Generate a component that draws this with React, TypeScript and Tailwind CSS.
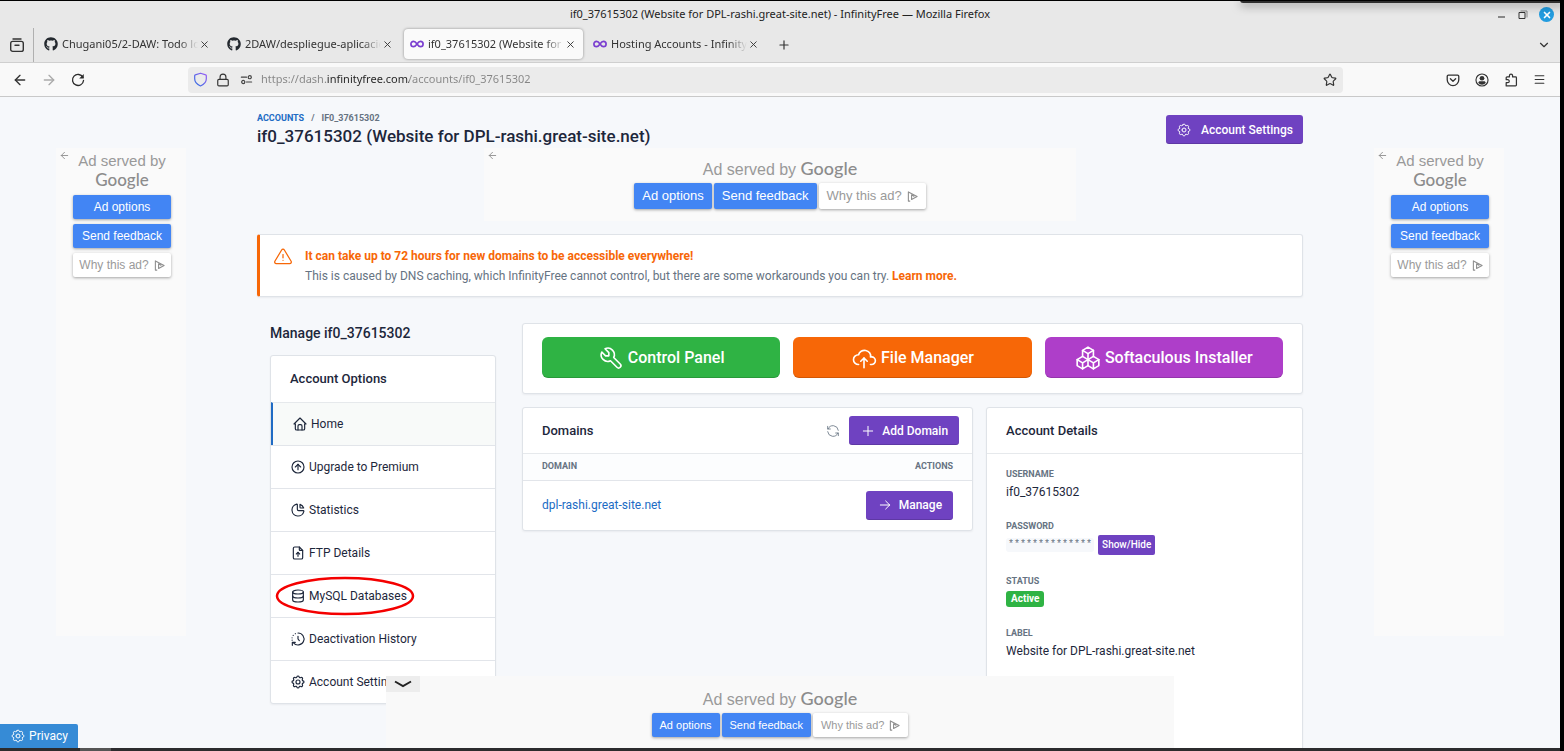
import React from 'react';
import {
  TbArrowRight,
  TbAlertTriangle,
  TbChartPie,
  TbCircleArrowUp,
  TbCloudUpload,
  TbDatabase,
  TbFileUpload,
  TbHome,
  TbPackages,
  TbPlus,
  TbRefresh,
  TbSettings,
  TbTool,
} from 'react-icons/tb';
import { FaGithub } from 'react-icons/fa';
import { ArrowLeft, ArrowRight, ChevronDown, Lock, Menu, Plus, Star, X } from 'lucide-react';

type IconProps = { className?: string };

function ArchiveIcon() {
  return (
    <svg viewBox="0 0 16 16" className="size-4" fill="none" stroke="#333" strokeWidth="1.4" strokeLinecap="round">
      <path d="M4 2h8" />
      <rect x="1.7" y="4.4" width="12.6" height="10" rx="2" />
      <path d="M6 8.2h4" />
    </svg>
  );
}

function InfinityLogo() {
  return (
    <svg viewBox="0 0 14 14" className="size-[14px] shrink-0" fill="none" stroke="#7b3fd0" strokeWidth="1.7">
      <path d="M7 7C5.8 5.2 4.8 4.3 3.6 4.3a2.7 2.7 0 0 0 0 5.4C4.8 9.7 5.8 8.8 7 7s2.2-2.7 3.4-2.7a2.7 2.7 0 0 1 0 5.4C9.2 9.7 8.2 8.8 7 7Z" />
    </svg>
  );
}

function ReloadIcon() {
  return (
    <svg viewBox="0 0 16 16" className="size-[14px]" fill="none" stroke="#2b2b2b" strokeWidth="1.5" strokeLinecap="round">
      <path d="M13.6 5A6.3 6.3 0 1 0 14.3 8.5" />
      <path d="M14.6 1v5.2H9.4Z" fill="#2b2b2b" stroke="none" />
    </svg>
  );
}

function ShieldIcon() {
  return (
    <svg viewBox="0 0 16 16" className="size-[15px] shrink-0" fill="none" strokeWidth="1.3" strokeLinejoin="round">
      <defs>
        <linearGradient id="shield-tint" x1="0" y1="1" x2="1" y2="0">
          <stop offset="0" stopColor="#2f6fe0" />
          <stop offset="1" stopColor="#9a5cf5" />
        </linearGradient>
      </defs>
      <path
        stroke="url(#shield-tint)"
        d="M8 1.3 13.6 3c.4.1.6.5.6.9v3.3c0 3.4-2.3 6-6.2 7.7-3.9-1.7-6.2-4.3-6.2-7.7V3.9c0-.4.2-.8.6-.9Z"
      />
    </svg>
  );
}

function PermissionsIcon() {
  return (
    <svg viewBox="0 0 14 14" className="size-[13px] shrink-0" fill="none" stroke="#444" strokeWidth="1.3" strokeLinecap="round">
      <path d="M1.5 4.5h5.5M7 9.7h5.5" />
      <circle cx="10.5" cy="4.5" r="1.7" />
      <circle cx="3.5" cy="9.7" r="1.7" />
    </svg>
  );
}

function PocketIcon() {
  return (
    <svg viewBox="0 0 16 16" className="size-[14px]" fill="none" stroke="#333" strokeWidth="1.5" strokeLinecap="round" strokeLinejoin="round">
      <path d="M2.7 2.5h10.6c.8 0 1.3.5 1.3 1.3v4A6.6 6.6 0 0 1 1.4 7.8v-4c0-.8.5-1.3 1.3-1.3Z" />
      <path d="m5 6.6 3 2.9 3-2.9" />
    </svg>
  );
}

function AccountIcon() {
  return (
    <svg viewBox="0 0 16 16" className="size-[14px]">
      <circle cx="8" cy="8" r="6.9" fill="none" stroke="#333" strokeWidth="1.3" />
      <circle cx="8" cy="6" r="2.7" fill="#333" />
      <path d="M3.8 11.5c0-1.3.8-2 2-2h4.4c1.2 0 2 .7 2 2A5.6 5.6 0 0 1 8 13.4a5.6 5.6 0 0 1-4.2-1.9Z" fill="#333" />
    </svg>
  );
}

function ExtensionIcon() {
  return (
    <svg viewBox="0 0 16 16" className="size-[14px]" fill="none" stroke="#333" strokeWidth="1.4" strokeLinejoin="round">
      <path d="M2.5 14.8V11h1.8a1.7 1.7 0 0 0 0-3.4H2.5V5.5c0-.6.4-1 1-1h2.7V3a1.8 1.8 0 0 1 3.6 0v1.5h3.4c.6 0 1 .4 1 1v8.3c0 .6-.4 1-1 1Z" />
    </svg>
  );
}

function HistoryIcon({ className }: IconProps) {
  return (
    <svg viewBox="0 0 24 24" className={className} fill="none" stroke="currentColor" strokeWidth="2" strokeLinecap="round" strokeLinejoin="round">
      <path d="M12 3a9 9 0 1 1-6.8 14.9" />
      <path d="M3.500 21.500v-4.500H8" />
      <path d="M12 8v4l2 2.500" />
      <path d="M8 4v.01M4.800 6.600v.01M3.100 10.300v.01M3.200 13.800v.01" />
    </svg>
  );
}

function AdChoicesIcon() {
  return (
    <svg viewBox="0 0 12 12" className="size-[11px] shrink-0" fill="none" stroke="#8f8f8f" strokeWidth="1.2" strokeLinejoin="round">
      <path d="M3.5 11H1.500V1l9.500 5-6 3.300V4.200L8 6" />
    </svg>
  );
}

const tabs = [
  { title: 'Chugani05/2-DAW: Todo lo h', icon: 'github', active: false },
  { title: '2DAW/despliegue-aplicacion', icon: 'github', active: false },
  { title: 'if0_37615302 (Website for D', icon: 'infinity', active: true },
  { title: 'Hosting Accounts - InfinityFr', icon: 'infinity', active: false },
];

function BrowserChrome() {
  return (
    <header className="shrink-0 font-['Noto_Sans',sans-serif] text-[#333]">
      <div className="bg-[#e8e8e8]">
        <div className="flex h-[27px] items-center">
          <div className="w-[82px]" />
          <p className="flex-1 text-center text-[11px] text-[#222]">
            if0_37615302 (Website for DPL-rashi.great-site.net) - InfinityFree — Mozilla Firefox
          </p>
          <div className="flex w-[82px] items-center justify-end gap-[10px] pr-[6px]">
            <button aria-label="Minimize" className="flex size-3 items-center justify-center">
              <span className="mt-1 h-[2px] w-[7px] bg-[#888]" />
            </button>
            <button aria-label="Restore" className="flex size-3 items-center justify-center">
              <svg viewBox="0 0 10 10" className="size-[10px]" fill="none">
                <path d="M1 2.5h6v6H1Z" stroke="#333" />
                <path d="M2.5 1H9v6.5" stroke="#888" />
              </svg>
            </button>
            <button aria-label="Close" className="flex size-[15px] items-center justify-center rounded-full bg-[#229cdf] text-white">
              <X className="size-[10px]" strokeWidth={4} />
            </button>
          </div>
        </div>
        <div className="flex h-[35px] items-stretch border-b border-[#cfcfcf]">
          <button aria-label="View recent browsing" className="flex w-[34px] items-center justify-center border-r border-[#b0b0b0]">
            <ArchiveIcon />
          </button>
          <nav className="flex pl-[2px]">
            {tabs.map((tab) => (
              <div key={tab.title} className="flex w-[183px] items-center px-[2px] pb-[2px]">
                <div
                  className={
                    tab.active
                      ? 'flex h-[30px] w-full items-center rounded bg-[#fafafa] px-[6px] shadow-[0_0_3px_rgba(0,0,0,0.4)]'
                      : 'flex h-[30px] w-full items-center px-[6px]'
                  }
                >
                  {tab.icon === 'github' ? <FaGithub className="size-[14px] shrink-0 text-[#24292f]" /> : <InfinityLogo />}
                  <span className="ml-1 flex-1 overflow-hidden whitespace-nowrap text-[11px] [mask-image:linear-gradient(90deg,#000_86%,transparent)]">
                    {tab.title}
                  </span>
                  <button aria-label="Close tab" className="flex w-[13px] shrink-0 justify-center">
                    <X className="size-[11px]" />
                  </button>
                </div>
              </div>
            ))}
          </nav>
          <button aria-label="New tab" className="flex w-8 items-center justify-center">
            <Plus className="size-[14px]" />
          </button>
          <div className="flex-1" />
          <button aria-label="List all tabs" className="flex w-8 items-center justify-center">
            <ChevronDown className="size-[14px]" />
          </button>
        </div>
      </div>
      <div className="flex h-[34px] items-center border-b border-[#c9c9c9] bg-[#f9f9f9]">
        <div className="flex w-[188px] items-center pl-[5px]">
          <button aria-label="Back" className="flex w-[29px] justify-center">
            <ArrowLeft className="size-4" />
          </button>
          <button aria-label="Forward" className="flex w-[29px] justify-center text-[#aaa]">
            <ArrowRight className="size-4" />
          </button>
          <button aria-label="Reload" className="flex w-[29px] justify-center">
            <ReloadIcon />
          </button>
        </div>
        <div className="flex h-[26px] flex-1 items-center rounded bg-[#ebebeb] pr-[6px] pl-[5px]">
          <ShieldIcon />
          <Lock className="ml-2 size-[14px] shrink-0" />
          <div className="ml-[10px] flex items-center">
            <PermissionsIcon />
          </div>
          <input
            aria-label="Address"
            defaultValue="https://dash.infinityfree.com/accounts/if0_37615302"
            className="ml-2 w-full bg-transparent bg-[linear-gradient(90deg,#858585_66px,#222_66px,#222_148px,#858585_148px)] bg-clip-text text-[11px] text-transparent outline-none"
          />
          <button aria-label="Bookmark this page" className="shrink-0">
            <Star className="size-[14px]" />
          </button>
        </div>
        <div className="flex w-[217px] items-center justify-end pr-[6px]">
          <button aria-label="Save to Pocket" className="flex w-[29px] justify-center">
            <PocketIcon />
          </button>
          <button aria-label="Account" className="flex w-[29px] justify-center">
            <AccountIcon />
          </button>
          <button aria-label="Extensions" className="flex w-[29px] justify-center">
            <ExtensionIcon />
          </button>
          <button aria-label="Open menu" className="flex w-[29px] justify-center">
            <Menu className="size-[13px]" />
          </button>
        </div>
      </div>
    </header>
  );
}

function GoogleWord() {
  return <span className="font-['Lato',sans-serif] font-medium text-[#8c8c8c]">Google</span>;
}

const adBlue = 'rounded-[2px] bg-[#4285f4] text-white shadow-[0_1px_3px_rgba(0,0,0,0.35)]';
const adWhite =
  'flex items-center justify-center gap-[5px] rounded-[2px] bg-white text-[#9a9a9a] shadow-[0_1px_3px_rgba(0,0,0,0.35)]';

function SideAd() {
  return (
    <aside className="mt-[51px] flex h-[488px] w-[130px] shrink-0 bg-[#fafafa] font-['Liberation_Sans',sans-serif]">
      <button aria-label="Go back" className="flex w-4 justify-center pt-[2px] text-[#8f8f8f]">
        <ArrowLeft className="size-[11px]" />
      </button>
      <div className="ml-px flex w-[98px] flex-col gap-[5px] pt-[3px] text-center text-[12px]">
        <p className="text-[15px] leading-[19px] text-[#999]">
          Ad served by
          <br />
          <span className="text-[17px]">
            <GoogleWord />
          </span>
        </p>
        <button className={`h-6 ${adBlue}`}>Ad options</button>
        <button className={`h-6 ${adBlue}`}>Send feedback</button>
        <button className={`h-6 ${adWhite}`}>
          Why this ad? <AdChoicesIcon />
        </button>
      </div>
    </aside>
  );
}

function TopAd() {
  return (
    <aside className="mx-auto flex h-[73px] w-[592px] bg-[#fafafa] font-['Liberation_Sans',sans-serif]">
      <button aria-label="Go back" className="flex w-4 items-start justify-center pt-[2px] text-[#8f8f8f]">
        <ArrowLeft className="size-[11px]" />
      </button>
      <div className="flex flex-1 flex-col items-center gap-px pt-2 pr-4 text-[13px]">
        <p className="text-[16px] leading-6 text-[#999]">
          Ad served by{' '}
          <span className="text-[18px]">
            <GoogleWord />
          </span>
        </p>
        <div className="flex gap-[2px]">
          <button className={`h-[26px] px-2 ${adBlue}`}>Ad options</button>
          <button className={`h-[26px] px-2 ${adBlue}`}>Send feedback</button>
          <button className={`h-[26px] px-2 ${adWhite}`}>
            Why this ad? <AdChoicesIcon />
          </button>
        </div>
      </div>
    </aside>
  );
}

function BottomAd() {
  return (
    <aside className="absolute inset-x-0 bottom-0 mx-auto flex h-[72px] w-[788px] bg-[#f9f9f9] font-['Liberation_Sans',sans-serif]">
      <button aria-label="Collapse ad" className="flex h-[16px] w-[34px] items-center justify-center bg-[#ededed]">
        <svg viewBox="0 0 18 8" className="h-2 w-[18px]" fill="none" stroke="#222" strokeWidth="2">
          <path d="M1 1.500 9 6l8-4.500" />
        </svg>
      </button>
      <div className="flex flex-1 flex-col items-center gap-px pt-[10px] pr-[34px] text-[11px]">
        <p className="text-[16px] leading-6 text-[#999]">
          Ad served by{' '}
          <span className="text-[18px]">
            <GoogleWord />
          </span>
        </p>
        <div className="flex gap-[2px]">
          <button className={`h-6 px-2 ${adBlue}`}>Ad options</button>
          <button className={`h-6 px-2 ${adBlue}`}>Send feedback</button>
          <button className={`h-6 px-2 ${adWhite}`}>
            Why this ad? <AdChoicesIcon />
          </button>
        </div>
      </div>
    </aside>
  );
}

const menu = [
  { label: 'Home', icon: TbHome },
  { label: 'Upgrade to Premium', icon: TbCircleArrowUp },
  { label: 'Statistics', icon: TbChartPie },
  { label: 'FTP Details', icon: TbFileUpload },
  { label: 'MySQL Databases', icon: TbDatabase },
  { label: 'Deactivation History', icon: HistoryIcon },
  { label: 'Account Settings', icon: TbSettings },
];

const card = 'rounded-[3px] border border-[#dfe3e8] bg-white shadow-[0_1px_2px_rgba(30,41,59,0.06)]';
const purple = 'flex h-[29px] items-center rounded-[3px] bg-[#6f42c1] font-medium text-white shadow-[inset_0_-1px_0_rgba(0,0,0,0.15)]';
const large = 'flex h-[41px] flex-1 items-center justify-center gap-1 rounded-md shadow-[inset_0_-1px_0_rgba(0,0,0,0.15)]';

function SideMenu() {
  return (
    <div className="w-[226px] shrink-0">
      <h2 className="text-[14px] leading-5 font-medium">Manage if0_37615302</h2>
      <nav className={`mt-3 ${card}`}>
        <h3 className="flex h-[46px] items-center px-[19px] text-[13px] font-medium">Account Options</h3>
        {menu.map(({ label, icon: Icon }) => (
          <a
            key={label}
            href="#"
            className={
              label === 'Home'
                ? 'flex h-[43px] items-center border-t border-l-2 border-t-[#e6e9ec] border-l-[#206bc4] bg-[#f8faf9] px-[19px]'
                : 'flex h-[43px] items-center border-t border-[#e2e5ea] px-[19px]'
            }
          >
            <span className="relative flex items-center gap-[3px]">
              <Icon className="size-4 [stroke-width:1.75]" />
              {label}
              {label === 'MySQL Databases' && (
                <svg
                  viewBox="0 0 140 40"
                  className="pointer-events-none absolute -top-[11px] -left-[15px] h-10 w-[140px]"
                  fill="none"
                  stroke="#f40000"
                  strokeWidth="2.5"
                >
                  <ellipse cx="70" cy="20" rx="68" ry="18" />
                </svg>
              )}
            </span>
          </a>
        ))}
      </nav>
    </div>
  );
}

function Label({ children }: { children: React.ReactNode }) {
  return <dt className="text-[9px] leading-4 font-bold text-[#667382] uppercase">{children}</dt>;
}

function Main() {
  return (
    <main className="min-w-0 flex-1 pt-[15px]">
      <div className="flex items-start justify-between">
        <div>
          <nav className="flex gap-[7px] text-[9px] leading-3 font-bold text-[#667382] uppercase">
            <a href="#" className="text-[#206bc4]">
              Accounts
            </a>
            <span>/</span>
            <span>if0_37615302</span>
          </nav>
          <h1 className="text-[17px] leading-6 font-medium">if0_37615302 (Website for DPL-rashi.great-site.net)</h1>
        </div>
        <button className={`mt-[3px] gap-[9px] px-[10px] ${purple}`}>
          <TbSettings className="size-4 [stroke-width:1.5]" />
          Account Settings
        </button>
      </div>

      <TopAd />

      <section className={`mt-[13px] flex h-[63px] border-l-[3px] border-l-[#f76707] pt-[11px] pl-[13px] ${card}`}>
        <TbAlertTriangle className="mt-[1px] size-5 text-[#f76707] [stroke-width:1.5]" />
        <div className="ml-3 leading-5 text-[#667382]">
          <p className="font-bold text-[#f76707]">It can take up to 72 hours for new domains to be accessible everywhere!</p>
          <p>
            This is caused by DNS caching, which InfinityFree cannot control, but there are some workarounds you can try.{' '}
            <a href="#" className="font-bold text-[#f76707]">
              Learn more.
            </a>
          </p>
        </div>
      </section>

      <div className="mt-[26px] flex items-start gap-[26px] pl-[13px]">
        <SideMenu />
        <div className="flex min-w-0 flex-1 flex-col gap-[13px]">
          <section className={`flex gap-[13px] px-[19px] pt-[13px] pb-[15px] text-[16px] font-medium text-white ${card}`}>
            <button className={`bg-[#2fb344] ${large}`}>
              <TbTool className="size-[26px] [stroke-width:1.5]" />
              Control Panel
            </button>
            <button className={`bg-[#f76707] ${large}`}>
              <TbCloudUpload className="size-[26px] [stroke-width:1.5]" />
              File Manager
            </button>
            <button className={`bg-[#ae3ec9] ${large}`}>
              <TbPackages className="size-[26px] [stroke-width:1.5]" />
              Softaculous Installer
            </button>
          </section>

          <div className="flex items-start gap-[13px]">
            <section className={`flex-[452] ${card}`}>
              <div className="flex h-[46px] items-center border-b border-[#e6e9ec] pr-[13px] pl-[19px]">
                <h3 className="flex-1 text-[13px] font-medium">Domains</h3>
                <button aria-label="Refresh" className="mr-2 text-[#667382]">
                  <TbRefresh className="size-4 [stroke-width:1.25]" />
                </button>
                <button className={`gap-[6px] px-[11px] ${purple}`}>
                  <TbPlus className="size-4 [stroke-width:1.5]" />
                  Add Domain
                </button>
              </div>
              <table className="w-full">
                <thead>
                  <tr className="h-[26px] border-b border-[#e2e5ea] bg-[#fcfdfe] text-[9px] text-[#667382] uppercase">
                    <th className="pl-[19px] text-left font-bold">Domain</th>
                    <th className="pr-[19px] text-right font-bold">Actions</th>
                  </tr>
                </thead>
                <tbody>
                  <tr className="h-[50px]">
                    <td className="pl-[19px]">
                      <a href="#" className="text-[#206bc4]">
                        dpl-rashi.great-site.net
                      </a>
                    </td>
                    <td className="pr-[19px]">
                      <button className={`ml-auto gap-[6px] px-[11px] ${purple}`}>
                        <TbArrowRight className="size-4 [stroke-width:1.5]" />
                        Manage
                      </button>
                    </td>
                  </tr>
                </tbody>
              </table>
            </section>

            <section className={`min-h-[400px] flex-[317] ${card}`}>
              <h3 className="flex h-[46px] items-center border-b border-[#e6e9ec] px-[19px] text-[13px] font-medium">
                Account Details
              </h3>
              <dl className="flex flex-col gap-4 px-[19px] pt-3 leading-5">
                <div>
                  <Label>Username</Label>
                  <dd>if0_37615302</dd>
                </div>
                <div>
                  <Label>Password</Label>
                  <dd className="flex items-center gap-1 pt-[1px] pb-[2px]">
                    <span className="h-[14px] rounded-[3px] bg-[#f6f8fb] px-[2px] font-['Liberation_Mono',monospace] text-[10px] leading-[14px] text-[#667382]">
                      **************
                    </span>
                    <button className="h-5 rounded-[2px] bg-[#6f42c1] px-1 text-[10px] font-medium text-white">Show/Hide</button>
                  </dd>
                </div>
                <div>
                  <Label>Status</Label>
                  <dd className="flex h-5 items-center">
                    <span className="h-4 rounded-[3px] bg-[#2fb344] px-[5px] text-[10px] leading-4 font-bold text-white">Active</span>
                  </dd>
                </div>
                <div>
                  <Label>Label</Label>
                  <dd>Website for DPL-rashi.great-site.net</dd>
                </div>
              </dl>
            </section>
          </div>
        </div>
      </div>
    </main>
  );
}

export default function App() {
  return (
    <div className="relative flex h-screen flex-col overflow-hidden border-t border-r-4 border-black">
      <BrowserChrome />
      <div className="relative min-h-0 flex-1 overflow-hidden bg-[#f6f8fb] font-['Roboto',sans-serif] text-[12px] text-[#1d273b]">
        <div className="flex gap-[71px] px-14">
          <SideAd />
          <Main />
          <SideAd />
        </div>
        <BottomAd />
        <button className="absolute bottom-0 left-0 flex h-6 w-[78px] items-center justify-center gap-[3px] rounded-tr-[2px] bg-[#368bd6] text-[12px] text-white">
          <TbSettings className="size-4 [stroke-width:1.5]" />
          Privacy
        </button>
      </div>
      <footer className="h-[3px] shrink-0 bg-[#2c2c2e] pl-20">
        <div className="h-full w-[31px] bg-[#555]" />
      </footer>
      <div className="absolute -top-px -right-1 h-[3px] w-[324px] rounded-bl bg-[#2e2e2e] shadow-[0_2px_10px_rgba(0,0,0,0.6)]" />
    </div>
  );
}
